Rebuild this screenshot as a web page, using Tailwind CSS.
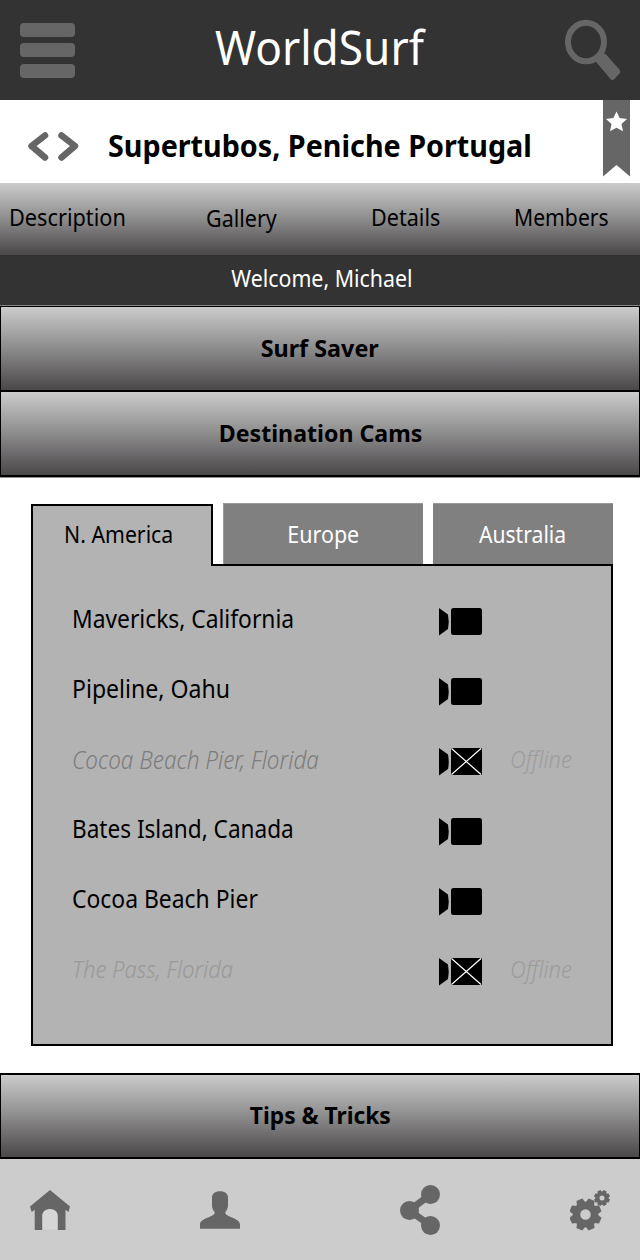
<!DOCTYPE html>
<html lang="en">
<head>
<meta charset="utf-8">
<title>WorldSurf</title>
<script src="https://cdn.jsdelivr.net/npm/@tailwindcss/browser@4"></script>
</head>
<body class="w-[640px] h-[1260px] overflow-hidden bg-white text-black font-['Noto_Sans',sans-serif] whitespace-nowrap">
<div class="flex flex-col h-[1260px]">

<header class="h-[100px] shrink-0 bg-[#333333] flex items-start justify-between pl-5 pr-[19px]">
  <div class="w-[54px] pt-[22.5px] flex flex-col gap-[6.5px]">
    <div class="h-[14px] w-[55px] rounded-[4px] bg-[#666666]"></div>
    <div class="h-[14px] w-[55px] rounded-[4px] bg-[#666666]"></div>
    <div class="h-[14px] w-[55px] rounded-[4px] bg-[#666666]"></div>
  </div>
  <h1 class="text-[48px] leading-[93px] text-white origin-center scale-x-[0.921]">WorldSurf</h1>
  <svg class="mt-[19px]" width="56" height="62" viewBox="0 0 56 62" fill="none" stroke="#666666"><ellipse cx="21" cy="23" rx="18" ry="19.3" stroke-width="6"/><path d="M30.700 42.500L33.500 37.500L38.500 34.500Q40 34 41.500 36L54.500 50.500Q56 52.700 54.500 54.500L49.500 60Q47.500 61.800 45.500 60Z" fill="#666666" stroke="none"/></svg>
</header>

<section class="h-[83px] shrink-0 flex items-start pl-7 pr-[10px]">
  <svg class="mt-[31px] shrink-0" width="51" height="31" viewBox="0 0 51 31" fill="none" stroke="#666666" stroke-width="6.500" stroke-linecap="round" stroke-linejoin="round"><path d="M17 4.500L3.500 15L17 26.500M33.500 4.500L47 15L33.500 26.500"/></svg>
  <h2 class="ml-[29px] text-[30px] leading-[91px] font-bold origin-left scale-x-[0.957]">Supertubos, Peniche Portugal</h2>
  <svg class="ml-auto shrink-0" width="27" height="77" viewBox="0 0 27 77"><path d="M0 0H27V76.500L13.500 65L0 76.500Z" fill="#666666"/><path d="M13.500 11.400L16.600 18.100L24 19L18.500 24L20 31.300L13.500 27.700L7 31.300L8.500 24L3 19L10.400 18.100Z" fill="white"/></svg>
</section>

<nav class="h-[72px] shrink-0 bg-linear-to-b from-[#cccccc] via-[#8d8c8d] to-[#4b484a] flex text-[24px] leading-[67px]">
  <span class="w-[197px] pl-[9px]"><span class="inline-block origin-left scale-x-[0.905]">Description</span></span>
  <span class="w-[164px] pl-[9px] pt-px"><span class="inline-block origin-left scale-x-[0.895]">Gallery</span></span>
  <span class="w-[143px] pl-[9.5px]"><span class="inline-block origin-left scale-x-[0.899]">Details</span></span>
  <span class="pl-[9.5px]"><span class="inline-block origin-left scale-x-[0.881]">Members</span></span>
</nav>
<p class="h-[50px] shrink-0 bg-[#333333] text-white text-[24px] leading-[46px] flex justify-center pl-[4px]"><span class="scale-x-[0.889]">Welcome, Michael</span></p>

<div class="h-px shrink-0 bg-[#858585]"></div>
<div class="h-[86px] shrink-0 border-x border-t border-b-2 border-black bg-linear-to-b from-[#cccccc] via-[#8d8c8d] to-[#4b484a] flex justify-center text-[24px] leading-[81px] font-bold"><span class="scale-x-[0.973]">Surf Saver</span></div>
<div class="h-[85px] shrink-0 border-x border-b-2 border-black bg-linear-to-b from-[#cccccc] via-[#8d8c8d] to-[#4b484a] flex justify-center text-[24px] leading-[81px] font-bold pl-px"><span class="scale-x-[0.964]">Destination Cams</span></div>

<section class="pt-[26px] px-[27px] pl-[31px] h-[596px] shrink-0 border-t border-[#8f8f8f]">
  <div class="-mt-px flex h-[63px] text-[24px] leading-[60px]">
    <div class="mt-px w-[182px] h-[62px] border-2 border-b-0 border-black bg-[#b3b3b3] text-center leading-[56px] pr-[7px] z-10"><span class="inline-block scale-x-[0.885]">N. America</span></div>
    <div class="ml-[10px] w-[201px] h-[61px] bg-[#808080] border-t border-l border-[#999] text-white text-center"><span class="inline-block scale-x-[0.895]">Europe</span></div>
    <div class="ml-[9.5px] w-[180.5px] h-[61px] bg-[#808080] border-t border-[#999] text-white text-center"><span class="inline-block scale-x-[0.881]">Australia</span></div>
  </div>
  <div class="-mt-[2px] h-[482px] w-[582px] border-2 border-black bg-[#b3b3b3] pt-[18px] pl-[38.5px] text-[25px] leading-[69px]">
    <div class="h-[70px] flex items-start"><span class="w-[367.5px]"><span class="inline-block origin-left scale-x-[0.912]">Mavericks, California</span></span><svg class="mt-[24px]" width="44" height="28"><use href="#cam"/></svg></div>
    <div class="h-[70px] flex items-start"><span class="w-[367.5px]"><span class="inline-block origin-left scale-x-[0.923]">Pipeline, Oahu</span></span><svg class="mt-[24px]" width="44" height="28"><use href="#cam"/></svg></div>
    <div class="h-[70px] flex items-start font-light italic leading-[70px]"><span class="w-[367.5px] text-[#7c7c7c]"><span class="inline-block origin-left scale-x-[0.9]">Cocoa Beach Pier, Florida</span></span><svg class="mt-[24px]" width="44" height="28"><use href="#off"/></svg><span class="ml-[26.5px] text-[24px] text-[#9c9c9c] origin-left scale-x-[0.912]">Offline</span></div>
    <div class="h-[70px] flex items-start"><span class="w-[367.5px]"><span class="inline-block origin-left scale-x-[0.903]">Bates Island, Canada</span></span><svg class="mt-[24px]" width="44" height="28"><use href="#cam"/></svg></div>
    <div class="h-[70px] flex items-start"><span class="w-[367.5px]"><span class="inline-block origin-left scale-x-[0.916]">Cocoa Beach Pier</span></span><svg class="mt-[24px]" width="44" height="28"><use href="#cam"/></svg></div>
    <div class="h-[70px] flex items-start font-light italic text-[24px] leading-[70px] text-[#999999]"><span class="w-[367.5px]"><span class="inline-block origin-left scale-x-[0.92]">The Pass, Florida</span></span><svg class="mt-[24px]" width="44" height="28"><use href="#off"/></svg><span class="ml-[26.5px] text-[#9c9c9c] origin-left scale-x-[0.912]">Offline</span></div>
  </div>
</section>

<div class="h-[86px] shrink-0 border-x border-t-2 border-b-2 border-black bg-linear-to-b from-[#cccccc] via-[#8d8c8d] to-[#4b484a] flex justify-center text-[24px] leading-[80px] font-bold"><span class="scale-x-[0.949]">Tips &amp; Tricks</span></div>

<footer class="grow bg-[#cccccc] flex items-start pl-[30px] pt-[26px]">
  <svg class="mt-[5px] mr-[130px]" width="40" height="40" viewBox="0 0 40 40" fill="#666666"><path d="M11 20H29V39.500H11Z" fill="#d6d6d6"/><path d="M20 0L40 16.500L38.500 22L35.500 19.700V40H27.800V26C27.800 21.500 24 19 20 19S12.200 21.500 12.200 26V40H4.700V19.700L1.700 22L0 16.500Z"/></svg>
  <svg class="mt-[6px] mr-[160px]" width="40" height="38" viewBox="0 0 40 38" fill="#666666"><path d="M20 0.300C25 0.300 28 3 28 6.500V14.500C28 17.500 26.500 19.500 25.200 21.500C25 26 40 27 40 33.500V37.700H0V33.500C0 27 15 26 14.800 21.500C13.500 19.500 12 17.500 12 14.500V6.500C12 3 15 0.300 20 0.300Z"/></svg>
  <svg class="mr-[130px]" width="40" height="50" viewBox="0 0 40 50" fill="#666666"><path d="M30.500 9.500L9.300 25.500L30.500 40.500" fill="none" stroke="#666666" stroke-width="7"/><circle cx="30.500" cy="9.500" r="9.500"/><circle cx="9.500" cy="25.500" r="9.500"/><circle cx="30.500" cy="40.500" r="9.500"/></svg>
  <svg class="mt-[5px]" width="40" height="41" viewBox="0 0 40 41" fill="none" stroke="#666666">
    <circle cx="15.500" cy="24.500" r="9" stroke-width="7.500"/><circle cx="32" cy="8" r="4.500" stroke-width="4"/>
    <g id="gear" fill="#666666" stroke="none"><g transform="translate(15.500 24.500)"><path id="t" d="M-4.600-11L-3.200-16H3.200L4.600-11Z" transform="rotate(22.500)"/><use href="#t" transform="rotate(45)"/><use href="#t" transform="rotate(90)"/><use href="#t" transform="rotate(135)"/><use href="#t" transform="rotate(180)"/><use href="#t" transform="rotate(225)"/><use href="#t" transform="rotate(270)"/><use href="#t" transform="rotate(315)"/></g></g>
    <use href="#gear" transform="translate(24.250 -4.250) scale(.5)"/>
  </svg>
</footer>
</div>

<svg width="0" height="0">
  <defs>
    <g id="cam"><path d="M0 0L9 6.500Q10.500 14 9 21L0 27.500Z"/><rect x="12" y="0" width="31" height="27" rx="2.500"/></g>
    <g id="off"><path d="M0 0L9 6.500Q10.500 14 9 21L0 27.500Z"/><rect x="12" y="0" width="31" height="27" rx="1"/><path d="M12.500 .500L42 26.500M42 .500L12.500 26.500" stroke="white" stroke-width="1.200"/></g>
  </defs>
</svg>
</body>
</html>
